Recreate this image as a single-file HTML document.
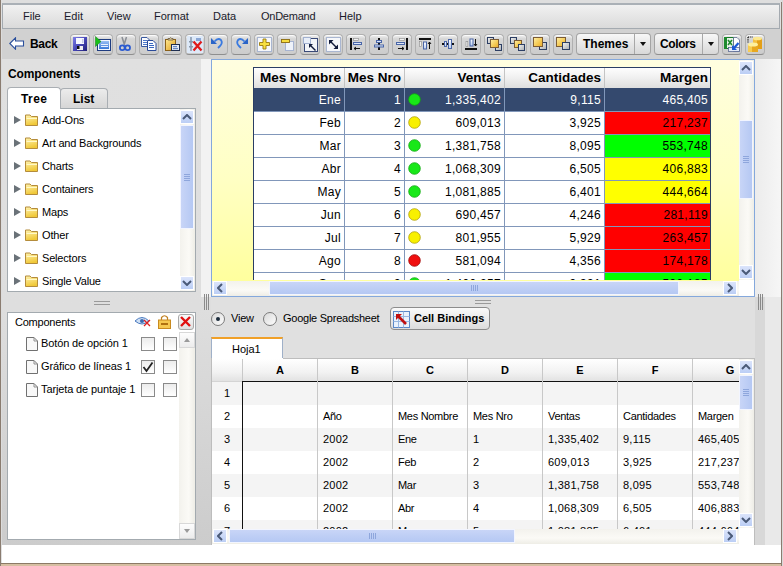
<!DOCTYPE html>
<html><head><meta charset="utf-8">
<style>
*{box-sizing:border-box;margin:0;padding:0}
html,body{width:783px;height:566px;overflow:hidden}
body{position:relative;background:#e0e0e0;font-family:"Liberation Sans",sans-serif;font-size:11px;color:#000}
.a{position:absolute}
.t{position:absolute;white-space:nowrap;line-height:1}
.tb{position:absolute;top:34px;width:20px;height:21px;border:1px solid #b0b0b0;border-bottom-color:#8e8e8e;border-radius:4px;background:linear-gradient(#f2f2f2,#d6d6d6 20%,#cccccc);box-shadow:inset 0 1px 0 #fafafa}
.tb svg{position:absolute;left:0;top:0}
.dd{position:absolute;top:33px;height:22px;border:1px solid #a4a4a4;border-bottom-color:#8e8e8e;border-radius:4px;background:linear-gradient(#f7f7f7,#d8d8d8);font-weight:bold;font-size:12px}
.box{position:absolute;background:#fff;border:1px solid #a3aaaf}
.trk{position:absolute;background:linear-gradient(90deg,#f2f1ec,#fbfaf6 60%,#eeede6)}
.trkh{position:absolute;background:linear-gradient(#f2f1ec,#fbfaf6 60%,#eeede6)}
.sbtn{position:absolute;background:linear-gradient(#dce5fb,#bccff5);border:1px solid #fff}
.thv{position:absolute;background:linear-gradient(90deg,#c9d6f7,#b6c9f3);border:1px solid #f2f5ff}
.thh{position:absolute;background:linear-gradient(#c9d6f7,#b6c9f3);border:1px solid #f2f5ff}
.xbtn{position:absolute;background:linear-gradient(#fafafa,#e4e4e4);border:1px solid #d0d0d0}
.folder{position:absolute;width:13px;height:11px}
.arr{position:absolute;width:0;height:0;border-left:7px solid #58626c;border-top:5px solid transparent;border-bottom:5px solid transparent}
.cb{position:absolute;width:14px;height:14px;border:1px solid #8f8f8f;background:linear-gradient(#f4f4f4,#ffffff)}
.doc{position:absolute}
</style></head><body>
<svg width="0" height="0" style="position:absolute"><defs><linearGradient id="fl" x1="0" y1="0" x2="1" y2="1"><stop offset="0" stop-color="#8080e8"/><stop offset=".5" stop-color="#4848b8"/><stop offset="1" stop-color="#202078"/></linearGradient><linearGradient id="bb" x1="0" y1="0" x2="0" y2="1"><stop offset="0" stop-color="#ffffff"/><stop offset="1" stop-color="#b8cdf0"/></linearGradient><linearGradient id="gg" x1="0" y1="0" x2="1" y2="1"><stop offset="0" stop-color="#f4f4f4"/><stop offset="1" stop-color="#a8acb0"/></linearGradient><linearGradient id="yy" x1="0" y1="0" x2="1" y2="1"><stop offset="0" stop-color="#fff0a8"/><stop offset=".6" stop-color="#f4c850"/><stop offset="1" stop-color="#e8a830"/></linearGradient><linearGradient id="rb" x1="0" y1="0" x2="0" y2="1"><stop offset="0" stop-color="#9cc0f4"/><stop offset="1" stop-color="#3a78d8"/></linearGradient><linearGradient id="cp" x1="0" y1="0" x2="1" y2="1"><stop offset="0" stop-color="#ffe890"/><stop offset="1" stop-color="#e0a020"/></linearGradient></defs></svg>
<div class="a" style="left:0px;top:0px;width:783px;height:3px;background:#dedede"></div>
<div class="a" style="left:2px;top:3px;width:778px;height:26px;border:1px solid #a4aab0;border-top:2px solid #aab0b6;background:linear-gradient(#f1f1f1,#dadada)"></div>
<div class="t" style="left:23px;top:11px;color:#1a1a2a;letter-spacing:0px">File</div>
<div class="t" style="left:64px;top:11px;color:#1a1a2a;letter-spacing:0px">Edit</div>
<div class="t" style="left:107px;top:11px;color:#1a1a2a;letter-spacing:0px">View</div>
<div class="t" style="left:154px;top:11px;color:#1a1a2a;letter-spacing:0px">Format</div>
<div class="t" style="left:213px;top:11px;color:#1a1a2a;letter-spacing:0px">Data</div>
<div class="t" style="left:261px;top:11px;color:#1a1a2a;letter-spacing:-0.25px">OnDemand</div>
<div class="t" style="left:339px;top:11px;color:#1a1a2a;letter-spacing:0px">Help</div>
<div class="a" style="left:2px;top:29px;width:779px;height:30px;background:#d1d1d1"></div>
<div class="a" style="left:1px;top:59px;width:210px;height:486px;background:linear-gradient(#e0e0e0 0px,#dfdfdf 130px,#dedede 250px,#cccccc 486px)"></div>
<svg class="a" style="left:9px;top:37px" width="16" height="13" viewBox="0 0 16 13"><path d="M0.8 6.5 L6.5 0.8 V4 H14.5 V9 H6.5 V12.2 Z" fill="#fff" stroke="#2a4f9c" stroke-width="1.1"/></svg>
<div class="t" style="left:30px;top:38px;font-weight:bold;font-size:12px;letter-spacing:-0.3px">Back</div>
<div class="tb" style="left:70px"><svg width="18" height="19" viewBox="0 0 18 19"><rect x="2" y="2" width="14" height="14" fill="url(#fl)"/><rect x="5" y="3" width="8" height="6" fill="#f6f8ff"/><rect x="11" y="4" width="1.5" height="4" fill="#c8cce8"/><rect x="6" y="11" width="6" height="4" fill="#f0f0f0"/><rect x="6" y="11" width="2.5" height="3" fill="#111"/></svg></div>
<div class="tb" style="left:93px"><svg width="18" height="19" viewBox="0 0 18 19"><rect x="3" y="4" width="14" height="12" fill="#1e3c80"/><rect x="4" y="5" width="12" height="10" fill="#f4f8ff"/><rect x="5" y="6" width="10" height="8" fill="url(#rb)"/><rect x="7" y="9" width="7" height="1" fill="#e8f0ff"/><rect x="7" y="11" width="7" height="1" fill="#e8f0ff"/><path d="M1.5 1.5 L7 6.5 L1.5 11.5 Z" fill="#18c018" stroke="#0e7a0e" stroke-width=".5"/></svg></div>
<div class="tb" style="left:116px"><svg width="18" height="19" viewBox="0 0 18 19"><path d="M5 2 L7.5 10 M9.5 2 L7 10" stroke="#8a8e96" stroke-width="1.5"/><circle cx="5.3" cy="12.8" r="2.4" fill="none" stroke="#2a5ad0" stroke-width="1.8"/><circle cx="10.6" cy="12.8" r="2.4" fill="none" stroke="#2a5ad0" stroke-width="1.8"/></svg></div>
<div class="tb" style="left:139px"><svg width="18" height="19" viewBox="0 0 18 19"><path d="M1.5 2.5 H7 L9.5 5 V11.5 H1.5 Z" fill="#fbfcff" stroke="#3a5aa0"/><rect x="3" y="5" width="4" height="1" fill="#4d78c8"/><rect x="3" y="7" width="5" height="1" fill="#4d78c8"/><rect x="3" y="9" width="5" height="1" fill="#4d78c8"/><path d="M7.5 5.5 H13 L16 8.5 V15.5 H7.5 Z" fill="#fbfcff" stroke="#2a4a98"/><rect x="9" y="8" width="4" height="1" fill="#3a68c0"/><rect x="9" y="10" width="5" height="1" fill="#3a68c0"/><rect x="9" y="12" width="5" height="1" fill="#3a68c0"/></svg></div>
<div class="tb" style="left:162px"><svg width="18" height="19" viewBox="0 0 18 19"><rect x="2.5" y="4.5" width="10" height="11" fill="url(#cp)" stroke="#8a6018"/><path d="M5 5 V3.5 H7 Q7.5 1.5 8.5 3.5 H10 V5 Z" fill="#e8d8a8" stroke="#6a5a40" stroke-width=".8"/><rect x="8.5" y="9.5" width="8" height="6" fill="#e4ebf6" stroke="#1e2e50"/><rect x="10" y="11" width="4" height="1.2" fill="#6a88c0"/><rect x="10" y="13" width="5" height="1.2" fill="#6a88c0"/></svg></div>
<div class="tb" style="left:185px"><svg width="18" height="19" viewBox="0 0 18 19"><rect x="1" y="1" width="16" height="17" fill="#dde9f8"/><rect x="10" y="3" width="5" height="3" fill="#8aa6d4"/><path d="M5 2 V16" stroke="#6e8098" stroke-width="1.2"/><rect x="3" y="6" width="4" height="1.5" fill="#8a98a8"/><rect x="3" y="11" width="4" height="1.5" fill="#8a98a8"/><path d="M7.5 6.5 L15.5 15.5 M15.5 6.5 L7.5 15.5" stroke="#e01a1a" stroke-width="2.3"/></svg></div>
<div class="tb" style="left:208px"><svg width="18" height="19" viewBox="0 0 18 19"><path d="M5.5 6.5 Q9 2.5 12 5 Q14 8 11 11 L9 13" fill="none" stroke="#3a7ae0" stroke-width="1.8"/><path d="M2 3 L2 9 L8 9 Z" fill="#2a64c8"/></svg></div>
<div class="tb" style="left:231px"><svg width="18" height="19" viewBox="0 0 18 19"><path d="M12.5 6.5 Q9 2.5 6 5 Q4 8 7 11 L9 13" fill="none" stroke="#3a7ae0" stroke-width="1.8"/><path d="M16 3 L16 9 L10 9 Z" fill="#2a64c8"/></svg></div>
<div class="tb" style="left:254px"><svg width="18" height="19" viewBox="0 0 18 19"><rect x="2" y="2" width="15" height="15" fill="#f6f7fa"/><rect x="2.5" y="2.5" width="14" height="14" fill="none" stroke="#5c74a8" stroke-width="1" stroke-dasharray="1 1"/><path d="M8 4 H11 V7.5 H14.5 V10.5 H11 V14 H8 V10.5 H4.5 V7.5 H8 Z" fill="#f8e040" stroke="#9a7a10" stroke-width=".9"/></svg></div>
<div class="tb" style="left:277px"><svg width="18" height="19" viewBox="0 0 18 19"><rect x="7" y="6" width="9" height="10" fill="#eef2fa"/><rect x="7.5" y="6.5" width="8" height="9" fill="none" stroke="#5c74a8" stroke-width="1" stroke-dasharray="1 1"/><rect x="3.5" y="4.5" width="8" height="3" fill="#f6dc40" stroke="#8a6a10" stroke-width=".9"/></svg></div>
<div class="tb" style="left:300px"><svg width="18" height="19" viewBox="0 0 18 19"><rect x="3.5" y="3.5" width="13" height="13" fill="#f2f4f8" stroke="#3a4a78"/><rect x="2" y="2" width="8" height="7" fill="#e8eef8"/><rect x="2.5" y="2.5" width="7" height="6" fill="none" stroke="#5c74a8" stroke-width="1" stroke-dasharray="1 1"/><path d="M8.5 9.5 L14.5 15.5" stroke="#101a3a" stroke-width="1.4"/><path d="M8 9 L12 9 L8 13 Z" fill="#101a3a"/></svg></div>
<div class="tb" style="left:323px"><svg width="18" height="19" viewBox="0 0 18 19"><rect x="2" y="2" width="15" height="15" fill="#f6f7fa"/><rect x="2.5" y="2.5" width="14" height="14" fill="none" stroke="#5c74a8" stroke-width="1" stroke-dasharray="1 1"/><path d="M5.5 5.5 L13.5 13.5" stroke="#101a3a" stroke-width="1.4"/><path d="M5 5 L9.5 5 L5 9.5 Z M14 14 L9.5 14 L14 9.5 Z" fill="#101a3a"/></svg></div>
<div class="tb" style="left:346px"><svg width="18" height="19" viewBox="0 0 18 19"><rect x="3" y="3" width="2" height="12" fill="#111"/><rect x="6.5" y="3.5" width="5" height="1.8" fill="#f2f2f2" stroke="#8a8a8a" stroke-width=".6"/><rect x="6.5" y="7.5" width="8" height="2" fill="url(#bb)" stroke="#4a66a8" stroke-width="1"/><path d="M13 13.5 H7 M7 13.5 L9 12 M7 13.5 L9 15" stroke="#111" stroke-width="1"/></svg></div>
<div class="tb" style="left:369px"><svg width="18" height="19" viewBox="0 0 18 19"><rect x="8" y="3" width="2" height="12" fill="#111"/><rect x="6.5" y="5.5" width="5" height="2" fill="url(#bb)" stroke="#4a66a8" stroke-width="1"/><rect x="4.5" y="10.0" width="9" height="2" fill="url(#bb)" stroke="#4a66a8" stroke-width="1"/></svg></div>
<div class="tb" style="left:392px"><svg width="18" height="19" viewBox="0 0 18 19"><rect x="13" y="3" width="2" height="12" fill="#111"/><rect x="6.5" y="3.5" width="5" height="1.8" fill="#f2f2f2" stroke="#8a8a8a" stroke-width=".6"/><rect x="3.5" y="7.5" width="8" height="2" fill="url(#bb)" stroke="#4a66a8" stroke-width="1"/><path d="M5 13.5 H11 M11 13.5 L9 12 M11 13.5 L9 15" stroke="#111" stroke-width="1"/></svg></div>
<div class="tb" style="left:415px"><svg width="18" height="19" viewBox="0 0 18 19"><rect x="3" y="3" width="12" height="2" fill="#111"/><rect x="3.5" y="6.5" width="1.8" height="5" fill="#f2f2f2" stroke="#8a8a8a" stroke-width=".6"/><rect x="7.5" y="7.0" width="3" height="7" fill="url(#bb)" stroke="#4a66a8" stroke-width="1"/><path d="M13.5 14 V7 M13.5 7 L12 9 M13.5 7 L15 9" stroke="#111" stroke-width="1"/></svg></div>
<div class="tb" style="left:438px"><svg width="18" height="19" viewBox="0 0 18 19"><rect x="3" y="8" width="12" height="2" fill="#111"/><rect x="5.5" y="6.5" width="2" height="5" fill="url(#bb)" stroke="#4a66a8" stroke-width="1"/><rect x="9.5" y="4.5" width="3" height="9" fill="url(#bb)" stroke="#4a66a8" stroke-width="1"/></svg></div>
<div class="tb" style="left:461px"><svg width="18" height="19" viewBox="0 0 18 19"><rect x="3" y="13" width="12" height="2" fill="#111"/><rect x="4" y="6.5" width="1.8" height="5" fill="#f2f2f2" stroke="#8a8a8a" stroke-width=".6"/><rect x="8.0" y="4.0" width="3" height="7" fill="url(#bb)" stroke="#4a66a8" stroke-width="1"/><path d="M13.5 4 V11 M13.5 11 L12 9 M13.5 11 L15 9" stroke="#111" stroke-width="1"/></svg></div>
<div class="tb" style="left:484px"><svg width="18" height="19" viewBox="0 0 18 19"><rect x="2.5" y="2.5" width="6" height="6" fill="url(#gg)" stroke="#2c3e64"/><rect x="10.5" y="9.5" width="6" height="6" fill="url(#gg)" stroke="#2c3e64"/><rect x="5.5" y="4.5" width="8" height="8" fill="url(#yy)" stroke="#7c5c34"/></svg></div>
<div class="tb" style="left:507px"><svg width="18" height="19" viewBox="0 0 18 19"><rect x="2.5" y="2.5" width="6" height="6" fill="url(#gg)" stroke="#2c3e64"/><rect x="6.5" y="5.5" width="7" height="7" fill="url(#yy)" stroke="#7c5c34"/><rect x="10.5" y="9.5" width="6" height="6" fill="url(#gg)" stroke="#2c3e64"/></svg></div>
<div class="tb" style="left:530px"><svg width="18" height="19" viewBox="0 0 18 19"><rect x="8.5" y="7.5" width="7" height="7" fill="url(#gg)" stroke="#2c3e64"/><rect x="2.5" y="2.5" width="9" height="9" fill="url(#yy)" stroke="#7c5c34"/></svg></div>
<div class="tb" style="left:553px"><svg width="18" height="19" viewBox="0 0 18 19"><rect x="2.5" y="2.5" width="9" height="9" fill="url(#yy)" stroke="#7c5c34"/><rect x="8.5" y="7.5" width="7" height="7" fill="url(#gg)" stroke="#2c3e64"/></svg></div>
<div class="dd" style="left:576px;width:75px"><span class="t" style="left:6px;top:4px;letter-spacing:0px">Themes</span><span class="a" style="left:57px;top:0;width:1px;height:20px;background:#a8a8a8"></span><span class="a" style="left:63px;top:8px;width:0;height:0;border-left:3.5px solid transparent;border-right:3.5px solid transparent;border-top:4px solid #111"></span></div>
<div class="dd" style="left:654px;width:65px"><span class="t" style="left:5px;top:4px;letter-spacing:-0.4px">Colors</span><span class="a" style="left:47px;top:0;width:1px;height:20px;background:#a8a8a8"></span><span class="a" style="left:53px;top:8px;width:0;height:0;border-left:3.5px solid transparent;border-right:3.5px solid transparent;border-top:4px solid #111"></span></div>
<div class="tb" style="left:722px"><svg width="18" height="19" viewBox="0 0 18 19"><rect x="1.5" y="2.5" width="9" height="11" fill="#e8f4e8" stroke="#1a7a2a"/><rect x="1" y="2" width="3" height="12" fill="#1e8a2e"/><path d="M5 5 L9 10 M9 5 L5 10" stroke="#1e8a2e" stroke-width="1.6"/><path d="M10.5 2.5 H14 L16.5 5 V16.5 H10.5 Z" fill="#fff" stroke="#5a6a90" stroke-width=".8"/><rect x="5.5" y="12.5" width="11" height="4" fill="#e6ecf8" stroke="#4a5a88" stroke-width=".7"/><path d="M15.5 8 L11 13" stroke="#1a5ad8" stroke-width="2.2"/><path d="M9 10 L9 15 L14 15 Z" fill="#1a5ad8"/></svg></div>
<div class="tb" style="left:745px"><svg width="18" height="19" viewBox="0 0 18 19"><path d="M2 2 H7 M2 2 V8" stroke="#111" stroke-width="1.2" stroke-dasharray="1.2 1"/><rect x="7" y="3" width="9" height="11" fill="#e4a018"/><rect x="7" y="3" width="4" height="11" fill="#f4c040"/><ellipse cx="11.5" cy="3.5" rx="4.5" ry="1.8" fill="#fce890"/><rect x="2" y="9" width="10" height="8" fill="#e8a820"/><rect x="2" y="9" width="4" height="8" fill="#f8cc50"/><ellipse cx="7" cy="9.5" rx="5" ry="2" fill="#fdf0a0"/></svg></div>
<div class="t" style="left:8px;top:68px;font-weight:bold;font-size:12px;letter-spacing:-0.1px">Components</div>
<div class="a" style="left:60px;top:88px;width:48px;height:21px;border:1px solid #a9aeb3;border-bottom:none;border-radius:4px 4px 0 0;background:linear-gradient(#ececec,#d5d5d5)"></div>
<div class="t" style="left:73px;top:93px;font-weight:bold;font-size:12px">List</div>
<div class="a" style="left:7px;top:108px;width:189px;height:184px;background:#fff;border:1px solid #a3aaaf"></div>
<div class="a" style="left:7px;top:87px;width:54px;height:22px;border:1px solid #a9aeb3;border-bottom:none;border-radius:4px 4px 0 0;background:#fff"></div>
<div class="t" style="left:21px;top:93px;font-weight:bold;font-size:12px;letter-spacing:0.4px">Tree</div>
<div class="arr" style="left:14px;top:116px;border-left:7px solid #6a7278;border-top-width:4px;border-bottom-width:4px"></div>
<div class="a" style="left:25px;top:114px;line-height:0"><svg width="14" height="12" viewBox="0 0 14 12"><defs><linearGradient id="fg" x1="0" y1="0" x2="0.3" y2="1"><stop offset="0" stop-color="#fff3b0"/><stop offset="1" stop-color="#f0c838"/></linearGradient></defs><path d="M0.5 11.5 V1 H5 L6.5 2.5 H12.5 V11.5 Z" fill="url(#fg)" stroke="#b48c3c"/><path d="M1.5 4.5 H12" stroke="#fff8c8" stroke-width="1"/></svg></div>
<div class="t" style="left:42px;top:115px;letter-spacing:-0.18px">Add-Ons</div>
<div class="arr" style="left:14px;top:139px;border-left:7px solid #6a7278;border-top-width:4px;border-bottom-width:4px"></div>
<div class="a" style="left:25px;top:137px;line-height:0"><svg width="14" height="12" viewBox="0 0 14 12"><defs><linearGradient id="fg" x1="0" y1="0" x2="0.3" y2="1"><stop offset="0" stop-color="#fff3b0"/><stop offset="1" stop-color="#f0c838"/></linearGradient></defs><path d="M0.5 11.5 V1 H5 L6.5 2.5 H12.5 V11.5 Z" fill="url(#fg)" stroke="#b48c3c"/><path d="M1.5 4.5 H12" stroke="#fff8c8" stroke-width="1"/></svg></div>
<div class="t" style="left:42px;top:138px;letter-spacing:-0.18px">Art and Backgrounds</div>
<div class="arr" style="left:14px;top:162px;border-left:7px solid #6a7278;border-top-width:4px;border-bottom-width:4px"></div>
<div class="a" style="left:25px;top:160px;line-height:0"><svg width="14" height="12" viewBox="0 0 14 12"><defs><linearGradient id="fg" x1="0" y1="0" x2="0.3" y2="1"><stop offset="0" stop-color="#fff3b0"/><stop offset="1" stop-color="#f0c838"/></linearGradient></defs><path d="M0.5 11.5 V1 H5 L6.5 2.5 H12.5 V11.5 Z" fill="url(#fg)" stroke="#b48c3c"/><path d="M1.5 4.5 H12" stroke="#fff8c8" stroke-width="1"/></svg></div>
<div class="t" style="left:42px;top:161px;letter-spacing:-0.18px">Charts</div>
<div class="arr" style="left:14px;top:185px;border-left:7px solid #6a7278;border-top-width:4px;border-bottom-width:4px"></div>
<div class="a" style="left:25px;top:183px;line-height:0"><svg width="14" height="12" viewBox="0 0 14 12"><defs><linearGradient id="fg" x1="0" y1="0" x2="0.3" y2="1"><stop offset="0" stop-color="#fff3b0"/><stop offset="1" stop-color="#f0c838"/></linearGradient></defs><path d="M0.5 11.5 V1 H5 L6.5 2.5 H12.5 V11.5 Z" fill="url(#fg)" stroke="#b48c3c"/><path d="M1.5 4.5 H12" stroke="#fff8c8" stroke-width="1"/></svg></div>
<div class="t" style="left:42px;top:184px;letter-spacing:-0.18px">Containers</div>
<div class="arr" style="left:14px;top:208px;border-left:7px solid #6a7278;border-top-width:4px;border-bottom-width:4px"></div>
<div class="a" style="left:25px;top:206px;line-height:0"><svg width="14" height="12" viewBox="0 0 14 12"><defs><linearGradient id="fg" x1="0" y1="0" x2="0.3" y2="1"><stop offset="0" stop-color="#fff3b0"/><stop offset="1" stop-color="#f0c838"/></linearGradient></defs><path d="M0.5 11.5 V1 H5 L6.5 2.5 H12.5 V11.5 Z" fill="url(#fg)" stroke="#b48c3c"/><path d="M1.5 4.5 H12" stroke="#fff8c8" stroke-width="1"/></svg></div>
<div class="t" style="left:42px;top:207px;letter-spacing:-0.18px">Maps</div>
<div class="arr" style="left:14px;top:231px;border-left:7px solid #6a7278;border-top-width:4px;border-bottom-width:4px"></div>
<div class="a" style="left:25px;top:229px;line-height:0"><svg width="14" height="12" viewBox="0 0 14 12"><defs><linearGradient id="fg" x1="0" y1="0" x2="0.3" y2="1"><stop offset="0" stop-color="#fff3b0"/><stop offset="1" stop-color="#f0c838"/></linearGradient></defs><path d="M0.5 11.5 V1 H5 L6.5 2.5 H12.5 V11.5 Z" fill="url(#fg)" stroke="#b48c3c"/><path d="M1.5 4.5 H12" stroke="#fff8c8" stroke-width="1"/></svg></div>
<div class="t" style="left:42px;top:230px;letter-spacing:-0.18px">Other</div>
<div class="arr" style="left:14px;top:254px;border-left:7px solid #6a7278;border-top-width:4px;border-bottom-width:4px"></div>
<div class="a" style="left:25px;top:252px;line-height:0"><svg width="14" height="12" viewBox="0 0 14 12"><defs><linearGradient id="fg" x1="0" y1="0" x2="0.3" y2="1"><stop offset="0" stop-color="#fff3b0"/><stop offset="1" stop-color="#f0c838"/></linearGradient></defs><path d="M0.5 11.5 V1 H5 L6.5 2.5 H12.5 V11.5 Z" fill="url(#fg)" stroke="#b48c3c"/><path d="M1.5 4.5 H12" stroke="#fff8c8" stroke-width="1"/></svg></div>
<div class="t" style="left:42px;top:253px;letter-spacing:-0.18px">Selectors</div>
<div class="arr" style="left:14px;top:277px;border-left:7px solid #6a7278;border-top-width:4px;border-bottom-width:4px"></div>
<div class="a" style="left:25px;top:275px;line-height:0"><svg width="14" height="12" viewBox="0 0 14 12"><defs><linearGradient id="fg" x1="0" y1="0" x2="0.3" y2="1"><stop offset="0" stop-color="#fff3b0"/><stop offset="1" stop-color="#f0c838"/></linearGradient></defs><path d="M0.5 11.5 V1 H5 L6.5 2.5 H12.5 V11.5 Z" fill="url(#fg)" stroke="#b48c3c"/><path d="M1.5 4.5 H12" stroke="#fff8c8" stroke-width="1"/></svg></div>
<div class="t" style="left:42px;top:276px;letter-spacing:-0.18px">Single Value</div>
<div class="a" style="left:180px;top:109px;width:15px;height:182px;background:linear-gradient(90deg,#f3f2ed,#fbfaf6 60%,#eeede6)"></div>
<div class="a" style="left:180px;top:110px;width:14px;height:14px;background:linear-gradient(#dbe4fb,#bbcef5);border:1px solid #fff"></div>
<div class="a" style="left:180px;top:125px;width:14px;height:104px;background:linear-gradient(90deg,#c8d5f7,#b5c8f3);border:1px solid #f2f5ff"></div>
<div class="a" style="left:180px;top:276px;width:14px;height:14px;background:linear-gradient(#dbe4fb,#bbcef5);border:1px solid #fff"></div>
<svg class="a" style="left:182px;top:114px" width="10" height="6" viewBox="0 0 10 6"><path d="M1 5 L5 1 L9 5" fill="none" stroke="#4a5a78" stroke-width="2"/></svg>
<svg class="a" style="left:182px;top:280px" width="10" height="6" viewBox="0 0 10 6"><path d="M1 1 L5 5 L9 1" fill="none" stroke="#4a5a78" stroke-width="2"/></svg>
<div class="a" style="left:184px;top:174px;width:6px;height:1px;background:#8ea6dc"></div>
<div class="a" style="left:184px;top:176px;width:6px;height:1px;background:#8ea6dc"></div>
<div class="a" style="left:184px;top:178px;width:6px;height:1px;background:#8ea6dc"></div>
<div class="a" style="left:184px;top:180px;width:6px;height:1px;background:#8ea6dc"></div>
<div class="a" style="left:94px;top:301px;width:16px;height:1px;background:#9a9a9a"></div>
<div class="a" style="left:94px;top:304px;width:16px;height:1px;background:#9a9a9a"></div>
<div class="a" style="left:7px;top:312px;width:189px;height:228px;background:#fff;border:1px solid #a3aaaf"></div>
<div class="t" style="left:15px;top:317px;letter-spacing:-0.22px">Components</div>
<div class="a" style="left:26px;top:337px"><svg width="12" height="14" viewBox="0 0 12 14"><path d="M0.5 0.5 H8 L11.5 4 V13.5 H0.5 Z" fill="#f8f8f8" stroke="#707070"/><path d="M8 0.5 V4 H11.5" fill="none" stroke="#909090"/></svg></div>
<div class="t" style="left:41px;top:338px;letter-spacing:-0.12px">Botón de opción 1</div>
<div class="a" style="left:141px;top:337px;width:14px;height:14px;border:1px solid #8a8a8a;background:linear-gradient(#ececec,#fff)"></div>
<div class="a" style="left:163px;top:337px;width:14px;height:14px;border:1px solid #8a8a8a;background:linear-gradient(#ececec,#fff)"></div>
<div class="a" style="left:26px;top:360px"><svg width="12" height="14" viewBox="0 0 12 14"><path d="M0.5 0.5 H8 L11.5 4 V13.5 H0.5 Z" fill="#f8f8f8" stroke="#707070"/><path d="M8 0.5 V4 H11.5" fill="none" stroke="#909090"/></svg></div>
<div class="t" style="left:41px;top:361px;letter-spacing:-0.12px">Gráfico de líneas 1</div>
<div class="a" style="left:141px;top:360px;width:14px;height:14px;border:1px solid #8a8a8a;background:linear-gradient(#ececec,#fff)"></div>
<div class="a" style="left:163px;top:360px;width:14px;height:14px;border:1px solid #8a8a8a;background:linear-gradient(#ececec,#fff)"></div>
<div class="a" style="left:26px;top:383px"><svg width="12" height="14" viewBox="0 0 12 14"><path d="M0.5 0.5 H8 L11.5 4 V13.5 H0.5 Z" fill="#f8f8f8" stroke="#707070"/><path d="M8 0.5 V4 H11.5" fill="none" stroke="#909090"/></svg></div>
<div class="t" style="left:41px;top:384px;letter-spacing:-0.12px">Tarjeta de puntaje 1</div>
<div class="a" style="left:141px;top:383px;width:14px;height:14px;border:1px solid #8a8a8a;background:linear-gradient(#ececec,#fff)"></div>
<div class="a" style="left:163px;top:383px;width:14px;height:14px;border:1px solid #8a8a8a;background:linear-gradient(#ececec,#fff)"></div>
<svg class="a" style="left:142px;top:361px" width="12" height="12" viewBox="0 0 12 12"><path d="M1.5 6 L4.5 10 L10.5 1.5" fill="none" stroke="#222" stroke-width="1.8"/></svg>
<svg class="a" style="left:134px;top:316px" width="17" height="11" viewBox="0 0 17 11"><path d="M1 5 Q8 -2 15 5 Q8 11 1 5 Z" fill="#cfe0f4" stroke="#4a7ac0"/><circle cx="8" cy="5" r="2" fill="#3a6ab0"/><path d="M10 4 L16 10 M16 4 L10 10" stroke="#e02020" stroke-width="1.3"/></svg>
<svg class="a" style="left:158px;top:314px" width="13" height="15" viewBox="0 0 13 15"><path d="M3.5 6 V3.5 Q6.5 0 9.5 3.5 V6" fill="none" stroke="#c08020" stroke-width="1.2"/><rect x="0.5" y="6" width="12" height="8.5" fill="#f6c850" stroke="#c88a20"/><rect x="3" y="9" width="7" height="2" fill="#b07010"/></svg>
<div class="a" style="left:178px;top:314px;width:16px;height:16px;border:1px solid #a8a8a8;border-radius:3px;background:linear-gradient(#fafafa,#e0e0e0)"></div>
<svg class="a" style="left:179px;top:315px" width="13" height="13" viewBox="0 0 13 13"><path d="M2 2 L11 11 M11 2 L2 11" stroke="#e01010" stroke-width="2.4"/></svg>
<div class="a" style="left:179px;top:332px;width:16px;height:207px;background:linear-gradient(90deg,#f3f2ed,#fbfaf6 60%,#eeede6)"></div>
<div class="a" style="left:179px;top:332px;width:16px;height:16px;background:linear-gradient(#fdfdfd,#ececec);border:1px solid #d8d8d8"></div>
<div class="a" style="left:179px;top:523px;width:16px;height:16px;background:linear-gradient(#fdfdfd,#ececec);border:1px solid #d8d8d8"></div>
<div class="a" style="left:183.5px;top:338px;border-left:3.5px solid transparent;border-right:3.5px solid transparent;border-bottom:4px solid #9a9a9a"></div>
<div class="a" style="left:183.5px;top:529px;border-left:3.5px solid transparent;border-right:3.5px solid transparent;border-top:4px solid #9a9a9a"></div>
<div class="a" style="left:201px;top:59px;width:10px;height:238px;background:#f2f2f2"></div>
<div class="a" style="left:755px;top:59px;width:26px;height:238px;background:linear-gradient(90deg,#ececec,#f6f6f6)"></div>
<div class="a" style="left:755px;top:297px;width:10px;height:248px;background:#d8d8d8"></div>
<div class="a" style="left:765px;top:297px;width:16px;height:248px;background:#e9e9e9"></div>
<div class="a" style="left:204px;top:294px;width:1px;height:16px;background:#8a8a8a"></div>
<div class="a" style="left:206px;top:294px;width:1px;height:16px;background:#8a8a8a"></div>
<div class="a" style="left:208px;top:294px;width:1px;height:16px;background:#8a8a8a"></div>
<div class="a" style="left:758px;top:294px;width:1px;height:16px;background:#8a8a8a"></div>
<div class="a" style="left:760px;top:294px;width:1px;height:16px;background:#8a8a8a"></div>
<div class="a" style="left:762px;top:294px;width:1px;height:16px;background:#8a8a8a"></div>
<div class="a" style="left:211px;top:59px;width:544px;height:238px;border:1px solid #84a8dc;background:linear-gradient(#fffee0,#ffffc4 50%,#ffff98)"></div>
<div class="a" style="left:253px;top:67px;width:458px;height:213px;background:#fff"></div>
<div class="a" style="left:253px;top:67px;width:458px;height:21px;background:linear-gradient(#ffffff,#f0f0f0 50%,#dedede)"></div>
<div class="a" style="left:253px;top:67px;width:458px;height:1px;background:#2a3d64"></div>
<div class="a" style="left:253px;top:67px;width:1px;height:213px;background:#2a3d64"></div>
<div class="a" style="left:710px;top:67px;width:1px;height:213px;background:#2a3d64"></div>
<div class="a" style="left:344px;top:68px;width:1px;height:20px;background:#c4c4c4"></div>
<div class="a" style="left:404px;top:68px;width:1px;height:20px;background:#c4c4c4"></div>
<div class="a" style="left:504px;top:68px;width:1px;height:20px;background:#c4c4c4"></div>
<div class="a" style="left:604px;top:68px;width:1px;height:20px;background:#c4c4c4"></div>
<div class="t" style="left:253px;width:88px;text-align:right;top:71px;font-weight:bold;font-size:13.5px">Mes Nombre</div>
<div class="t" style="left:344px;width:57px;text-align:right;top:71px;font-weight:bold;font-size:13.5px">Mes Nro</div>
<div class="t" style="left:404px;width:97px;text-align:right;top:71px;font-weight:bold;font-size:13.5px">Ventas</div>
<div class="t" style="left:504px;width:97px;text-align:right;top:71px;font-weight:bold;font-size:13.5px">Cantidades</div>
<div class="t" style="left:604px;width:104px;text-align:right;top:71px;font-weight:bold;font-size:13.5px">Margen</div>
<div class="a" style="left:0;top:0;width:783px;height:280px;overflow:hidden">
<div class="a" style="left:254px;top:88px;width:456px;height:23px;background:#34496e"></div>
<div class="a" style="left:344px;top:88px;width:1px;height:23px;background:#8197ba"></div>
<div class="a" style="left:404px;top:88px;width:1px;height:23px;background:#8197ba"></div>
<div class="a" style="left:504px;top:88px;width:1px;height:23px;background:#8197ba"></div>
<div class="a" style="left:604px;top:88px;width:1px;height:23px;background:#8197ba"></div>
<div class="t" style="left:253px;width:88px;text-align:right;top:94px;font-size:12px;letter-spacing:0.3px;color:#fff">Ene</div>
<div class="t" style="left:344px;width:57px;text-align:right;top:94px;font-size:12px;letter-spacing:0.3px;color:#fff">1</div>
<div class="t" style="left:404px;width:97px;text-align:right;top:94px;font-size:12px;letter-spacing:0.3px;color:#fff">1,335,402</div>
<div class="t" style="left:504px;width:97px;text-align:right;top:94px;font-size:12px;letter-spacing:0.3px;color:#fff">9,115</div>
<div class="t" style="left:604px;width:104px;text-align:right;top:94px;font-size:12px;letter-spacing:0.3px;color:#fff">465,405</div>
<svg class="a" style="left:408px;top:93px" width="13" height="13" viewBox="0 0 13 13"><circle cx="6.5" cy="6.5" r="5.8" fill="#18e818" stroke="#10a810" stroke-width=".8"/></svg>
<div class="a" style="left:254px;top:111px;width:456px;height:23px;background:#fff"></div>
<div class="a" style="left:605px;top:111px;width:105px;height:23px;background:#ff0000"></div>
<div class="a" style="left:254px;top:111px;width:456px;height:1px;background:#8197ba"></div>
<div class="a" style="left:344px;top:111px;width:1px;height:23px;background:#8197ba"></div>
<div class="a" style="left:404px;top:111px;width:1px;height:23px;background:#8197ba"></div>
<div class="a" style="left:504px;top:111px;width:1px;height:23px;background:#8197ba"></div>
<div class="a" style="left:604px;top:111px;width:1px;height:23px;background:#8197ba"></div>
<div class="t" style="left:253px;width:88px;text-align:right;top:117px;font-size:12px;letter-spacing:0.3px;color:#000">Feb</div>
<div class="t" style="left:344px;width:57px;text-align:right;top:117px;font-size:12px;letter-spacing:0.3px;color:#000">2</div>
<div class="t" style="left:404px;width:97px;text-align:right;top:117px;font-size:12px;letter-spacing:0.3px;color:#000">609,013</div>
<div class="t" style="left:504px;width:97px;text-align:right;top:117px;font-size:12px;letter-spacing:0.3px;color:#000">3,925</div>
<div class="t" style="left:604px;width:104px;text-align:right;top:117px;font-size:12px;letter-spacing:0.3px;color:#000">217,237</div>
<svg class="a" style="left:408px;top:116px" width="13" height="13" viewBox="0 0 13 13"><circle cx="6.5" cy="6.5" r="5.8" fill="#f8f000" stroke="#b0a000" stroke-width=".8"/></svg>
<div class="a" style="left:254px;top:134px;width:456px;height:23px;background:#fff"></div>
<div class="a" style="left:605px;top:134px;width:105px;height:23px;background:#00ff00"></div>
<div class="a" style="left:254px;top:134px;width:456px;height:1px;background:#8197ba"></div>
<div class="a" style="left:344px;top:134px;width:1px;height:23px;background:#8197ba"></div>
<div class="a" style="left:404px;top:134px;width:1px;height:23px;background:#8197ba"></div>
<div class="a" style="left:504px;top:134px;width:1px;height:23px;background:#8197ba"></div>
<div class="a" style="left:604px;top:134px;width:1px;height:23px;background:#8197ba"></div>
<div class="t" style="left:253px;width:88px;text-align:right;top:140px;font-size:12px;letter-spacing:0.3px;color:#000">Mar</div>
<div class="t" style="left:344px;width:57px;text-align:right;top:140px;font-size:12px;letter-spacing:0.3px;color:#000">3</div>
<div class="t" style="left:404px;width:97px;text-align:right;top:140px;font-size:12px;letter-spacing:0.3px;color:#000">1,381,758</div>
<div class="t" style="left:504px;width:97px;text-align:right;top:140px;font-size:12px;letter-spacing:0.3px;color:#000">8,095</div>
<div class="t" style="left:604px;width:104px;text-align:right;top:140px;font-size:12px;letter-spacing:0.3px;color:#000">553,748</div>
<svg class="a" style="left:408px;top:139px" width="13" height="13" viewBox="0 0 13 13"><circle cx="6.5" cy="6.5" r="5.8" fill="#18e818" stroke="#10a810" stroke-width=".8"/></svg>
<div class="a" style="left:254px;top:157px;width:456px;height:23px;background:#fff"></div>
<div class="a" style="left:605px;top:157px;width:105px;height:23px;background:#ffff00"></div>
<div class="a" style="left:254px;top:157px;width:456px;height:1px;background:#8197ba"></div>
<div class="a" style="left:344px;top:157px;width:1px;height:23px;background:#8197ba"></div>
<div class="a" style="left:404px;top:157px;width:1px;height:23px;background:#8197ba"></div>
<div class="a" style="left:504px;top:157px;width:1px;height:23px;background:#8197ba"></div>
<div class="a" style="left:604px;top:157px;width:1px;height:23px;background:#8197ba"></div>
<div class="t" style="left:253px;width:88px;text-align:right;top:163px;font-size:12px;letter-spacing:0.3px;color:#000">Abr</div>
<div class="t" style="left:344px;width:57px;text-align:right;top:163px;font-size:12px;letter-spacing:0.3px;color:#000">4</div>
<div class="t" style="left:404px;width:97px;text-align:right;top:163px;font-size:12px;letter-spacing:0.3px;color:#000">1,068,309</div>
<div class="t" style="left:504px;width:97px;text-align:right;top:163px;font-size:12px;letter-spacing:0.3px;color:#000">6,505</div>
<div class="t" style="left:604px;width:104px;text-align:right;top:163px;font-size:12px;letter-spacing:0.3px;color:#000">406,883</div>
<svg class="a" style="left:408px;top:162px" width="13" height="13" viewBox="0 0 13 13"><circle cx="6.5" cy="6.5" r="5.8" fill="#18e818" stroke="#10a810" stroke-width=".8"/></svg>
<div class="a" style="left:254px;top:180px;width:456px;height:23px;background:#fff"></div>
<div class="a" style="left:605px;top:180px;width:105px;height:23px;background:#ffff00"></div>
<div class="a" style="left:254px;top:180px;width:456px;height:1px;background:#8197ba"></div>
<div class="a" style="left:344px;top:180px;width:1px;height:23px;background:#8197ba"></div>
<div class="a" style="left:404px;top:180px;width:1px;height:23px;background:#8197ba"></div>
<div class="a" style="left:504px;top:180px;width:1px;height:23px;background:#8197ba"></div>
<div class="a" style="left:604px;top:180px;width:1px;height:23px;background:#8197ba"></div>
<div class="t" style="left:253px;width:88px;text-align:right;top:186px;font-size:12px;letter-spacing:0.3px;color:#000">May</div>
<div class="t" style="left:344px;width:57px;text-align:right;top:186px;font-size:12px;letter-spacing:0.3px;color:#000">5</div>
<div class="t" style="left:404px;width:97px;text-align:right;top:186px;font-size:12px;letter-spacing:0.3px;color:#000">1,081,885</div>
<div class="t" style="left:504px;width:97px;text-align:right;top:186px;font-size:12px;letter-spacing:0.3px;color:#000">6,401</div>
<div class="t" style="left:604px;width:104px;text-align:right;top:186px;font-size:12px;letter-spacing:0.3px;color:#000">444,664</div>
<svg class="a" style="left:408px;top:185px" width="13" height="13" viewBox="0 0 13 13"><circle cx="6.5" cy="6.5" r="5.8" fill="#18e818" stroke="#10a810" stroke-width=".8"/></svg>
<div class="a" style="left:254px;top:203px;width:456px;height:23px;background:#fff"></div>
<div class="a" style="left:605px;top:203px;width:105px;height:23px;background:#ff0000"></div>
<div class="a" style="left:254px;top:203px;width:456px;height:1px;background:#8197ba"></div>
<div class="a" style="left:344px;top:203px;width:1px;height:23px;background:#8197ba"></div>
<div class="a" style="left:404px;top:203px;width:1px;height:23px;background:#8197ba"></div>
<div class="a" style="left:504px;top:203px;width:1px;height:23px;background:#8197ba"></div>
<div class="a" style="left:604px;top:203px;width:1px;height:23px;background:#8197ba"></div>
<div class="t" style="left:253px;width:88px;text-align:right;top:209px;font-size:12px;letter-spacing:0.3px;color:#000">Jun</div>
<div class="t" style="left:344px;width:57px;text-align:right;top:209px;font-size:12px;letter-spacing:0.3px;color:#000">6</div>
<div class="t" style="left:404px;width:97px;text-align:right;top:209px;font-size:12px;letter-spacing:0.3px;color:#000">690,457</div>
<div class="t" style="left:504px;width:97px;text-align:right;top:209px;font-size:12px;letter-spacing:0.3px;color:#000">4,246</div>
<div class="t" style="left:604px;width:104px;text-align:right;top:209px;font-size:12px;letter-spacing:0.3px;color:#000">281,119</div>
<svg class="a" style="left:408px;top:208px" width="13" height="13" viewBox="0 0 13 13"><circle cx="6.5" cy="6.5" r="5.8" fill="#f8f000" stroke="#b0a000" stroke-width=".8"/></svg>
<div class="a" style="left:254px;top:226px;width:456px;height:23px;background:#fff"></div>
<div class="a" style="left:605px;top:226px;width:105px;height:23px;background:#ff0000"></div>
<div class="a" style="left:254px;top:226px;width:456px;height:1px;background:#8197ba"></div>
<div class="a" style="left:344px;top:226px;width:1px;height:23px;background:#8197ba"></div>
<div class="a" style="left:404px;top:226px;width:1px;height:23px;background:#8197ba"></div>
<div class="a" style="left:504px;top:226px;width:1px;height:23px;background:#8197ba"></div>
<div class="a" style="left:604px;top:226px;width:1px;height:23px;background:#8197ba"></div>
<div class="t" style="left:253px;width:88px;text-align:right;top:232px;font-size:12px;letter-spacing:0.3px;color:#000">Jul</div>
<div class="t" style="left:344px;width:57px;text-align:right;top:232px;font-size:12px;letter-spacing:0.3px;color:#000">7</div>
<div class="t" style="left:404px;width:97px;text-align:right;top:232px;font-size:12px;letter-spacing:0.3px;color:#000">801,955</div>
<div class="t" style="left:504px;width:97px;text-align:right;top:232px;font-size:12px;letter-spacing:0.3px;color:#000">5,929</div>
<div class="t" style="left:604px;width:104px;text-align:right;top:232px;font-size:12px;letter-spacing:0.3px;color:#000">263,457</div>
<svg class="a" style="left:408px;top:231px" width="13" height="13" viewBox="0 0 13 13"><circle cx="6.5" cy="6.5" r="5.8" fill="#f8f000" stroke="#b0a000" stroke-width=".8"/></svg>
<div class="a" style="left:254px;top:249px;width:456px;height:23px;background:#fff"></div>
<div class="a" style="left:605px;top:249px;width:105px;height:23px;background:#ff0000"></div>
<div class="a" style="left:254px;top:249px;width:456px;height:1px;background:#8197ba"></div>
<div class="a" style="left:344px;top:249px;width:1px;height:23px;background:#8197ba"></div>
<div class="a" style="left:404px;top:249px;width:1px;height:23px;background:#8197ba"></div>
<div class="a" style="left:504px;top:249px;width:1px;height:23px;background:#8197ba"></div>
<div class="a" style="left:604px;top:249px;width:1px;height:23px;background:#8197ba"></div>
<div class="t" style="left:253px;width:88px;text-align:right;top:255px;font-size:12px;letter-spacing:0.3px;color:#000">Ago</div>
<div class="t" style="left:344px;width:57px;text-align:right;top:255px;font-size:12px;letter-spacing:0.3px;color:#000">8</div>
<div class="t" style="left:404px;width:97px;text-align:right;top:255px;font-size:12px;letter-spacing:0.3px;color:#000">581,094</div>
<div class="t" style="left:504px;width:97px;text-align:right;top:255px;font-size:12px;letter-spacing:0.3px;color:#000">4,356</div>
<div class="t" style="left:604px;width:104px;text-align:right;top:255px;font-size:12px;letter-spacing:0.3px;color:#000">174,178</div>
<svg class="a" style="left:408px;top:254px" width="13" height="13" viewBox="0 0 13 13"><circle cx="6.5" cy="6.5" r="5.8" fill="#f01010" stroke="#a00808" stroke-width=".8"/></svg>
<div class="a" style="left:254px;top:272px;width:456px;height:23px;background:#fff"></div>
<div class="a" style="left:605px;top:272px;width:105px;height:23px;background:#00ff00"></div>
<div class="a" style="left:254px;top:272px;width:456px;height:1px;background:#8197ba"></div>
<div class="a" style="left:344px;top:272px;width:1px;height:23px;background:#8197ba"></div>
<div class="a" style="left:404px;top:272px;width:1px;height:23px;background:#8197ba"></div>
<div class="a" style="left:504px;top:272px;width:1px;height:23px;background:#8197ba"></div>
<div class="a" style="left:604px;top:272px;width:1px;height:23px;background:#8197ba"></div>
<div class="t" style="left:253px;width:88px;text-align:right;top:278px;font-size:12px;letter-spacing:0.3px;color:#000">Sep</div>
<div class="t" style="left:344px;width:57px;text-align:right;top:278px;font-size:12px;letter-spacing:0.3px;color:#000">9</div>
<div class="t" style="left:404px;width:97px;text-align:right;top:278px;font-size:12px;letter-spacing:0.3px;color:#000">1,400,257</div>
<div class="t" style="left:504px;width:97px;text-align:right;top:278px;font-size:12px;letter-spacing:0.3px;color:#000">9,391</div>
<div class="t" style="left:604px;width:104px;text-align:right;top:278px;font-size:12px;letter-spacing:0.3px;color:#000">590,185</div>
<svg class="a" style="left:408px;top:277px" width="13" height="13" viewBox="0 0 13 13"><circle cx="6.5" cy="6.5" r="5.8" fill="#18e818" stroke="#10a810" stroke-width=".8"/></svg>
</div>
<div class="a" style="left:739px;top:60px;width:15px;height:220px;background:linear-gradient(90deg,#f3f2ed,#fbfaf6 60%,#eeede6)"></div>
<div class="a" style="left:739px;top:61px;width:14px;height:14px;background:linear-gradient(#dbe4fb,#bbcef5);border:1px solid #fff"><div class="a" style="left:1px;top:3px;line-height:0"><svg width="10" height="6" viewBox="0 0 10 6"><path d="M1 5 L5 1 L9 5" fill="none" stroke="#4a5a78" stroke-width="2"/></svg></div></div>
<div class="a" style="left:739px;top:120px;width:14px;height:79px;background:linear-gradient(90deg,#c8d5f7,#b5c8f3);border:1px solid #f2f5ff"></div>
<div class="a" style="left:743px;top:156px;width:6px;height:1px;background:#8ea6dc"></div>
<div class="a" style="left:743px;top:158px;width:6px;height:1px;background:#8ea6dc"></div>
<div class="a" style="left:743px;top:160px;width:6px;height:1px;background:#8ea6dc"></div>
<div class="a" style="left:743px;top:162px;width:6px;height:1px;background:#8ea6dc"></div>
<div class="a" style="left:739px;top:265px;width:14px;height:14px;background:linear-gradient(#dbe4fb,#bbcef5);border:1px solid #fff"><div class="a" style="left:1px;top:3px;line-height:0"><svg width="10" height="6" viewBox="0 0 10 6"><path d="M1 1 L5 5 L9 1" fill="none" stroke="#4a5a78" stroke-width="2"/></svg></div></div>
<div class="a" style="left:212px;top:281px;width:527px;height:15px;background:linear-gradient(#f3f2ed,#fbfaf6 60%,#eeede6)"></div>
<div class="a" style="left:213px;top:281px;width:14px;height:14px;background:linear-gradient(#dbe4fb,#bbcef5);border:1px solid #fff"><div class="a" style="left:3px;top:1px;line-height:0"><svg width="6" height="10" viewBox="0 0 6 10"><path d="M5 1 L1 5 L5 9" fill="none" stroke="#4a5a78" stroke-width="2"/></svg></div></div>
<div class="a" style="left:269px;top:281px;width:410px;height:14px;background:linear-gradient(#c8d5f7,#b5c8f3);border:1px solid #f2f5ff"></div>
<div class="a" style="left:471px;top:285px;width:1px;height:6px;background:#8ea6dc"></div>
<div class="a" style="left:473px;top:285px;width:1px;height:6px;background:#8ea6dc"></div>
<div class="a" style="left:475px;top:285px;width:1px;height:6px;background:#8ea6dc"></div>
<div class="a" style="left:477px;top:285px;width:1px;height:6px;background:#8ea6dc"></div>
<div class="a" style="left:723px;top:281px;width:14px;height:14px;background:linear-gradient(#dbe4fb,#bbcef5);border:1px solid #fff"><div class="a" style="left:3px;top:1px;line-height:0"><svg width="6" height="10" viewBox="0 0 6 10"><path d="M1 1 L5 5 L1 9" fill="none" stroke="#4a5a78" stroke-width="2"/></svg></div></div>
<div class="a" style="left:739px;top:280px;width:15px;height:16px;background:#fff"></div>
<div class="a" style="left:475px;top:300px;width:16px;height:1px;background:#9a9a9a"></div>
<div class="a" style="left:475px;top:303px;width:16px;height:1px;background:#9a9a9a"></div>
<svg width="0" height="0" style="position:absolute"><defs><linearGradient id="rg" x1="0" y1="0" x2="1" y2="1"><stop offset="0" stop-color="#d8d8d8"/><stop offset="1" stop-color="#ffffff"/></linearGradient></defs></svg>
<svg class="a" style="left:211px;top:312px" width="15" height="15" viewBox="0 0 15 15"><circle cx="7" cy="7" r="6.5" fill="url(#rg)" stroke="#7a7a7a"/><circle cx="7" cy="7" r="2" fill="#1a2a3a"/></svg>
<div class="t" style="left:231px;top:313px;font-size:11px;letter-spacing:-0.2px">View</div>
<svg class="a" style="left:263px;top:312px" width="15" height="15" viewBox="0 0 15 15"><circle cx="7" cy="7" r="6.5" fill="url(#rg)" stroke="#7a7a7a"/></svg>
<div class="t" style="left:283px;top:313px;font-size:11px;letter-spacing:-0.25px">Google Spreadsheet</div>
<div class="a" style="left:390px;top:307px;width:100px;height:23px;border:1px solid #8c8c8c;border-radius:4px;background:linear-gradient(#fafafa,#dcdcdc)"></div>
<svg class="a" style="left:393px;top:311px" width="17" height="17" viewBox="0 0 17 17"><rect x="0.5" y="0.5" width="16" height="16" fill="#eaf2fc" stroke="#5a88c8"/><path d="M0.5 5.5 H16.5 M0.5 10.5 H16.5 M5.5 0.5 V16.5 M10.5 0.5 V16.5" stroke="#9ab8e0"/><path d="M4 4 L13 13" stroke="#c01010" stroke-width="2.6"/><path d="M3 3 L9 3 L3 9 Z" fill="#c01010"/></svg>
<div class="t" style="left:414px;top:313px;font-weight:bold;font-size:11px">Cell Bindings</div>
<div class="a" style="left:211px;top:337px;width:72px;height:22px;border:1px solid #9fb0c8;border-top:2px solid #f0a028;border-bottom:none;background:#fff"></div>
<div class="t" style="left:232px;top:344px;font-size:11px">Hoja1</div>
<div class="a" style="left:211px;top:358px;width:544px;height:187px;background:#fff;border:1px solid #bdbdbd;border-bottom:none"></div>
<div class="a" style="left:212px;top:359px;width:527px;height:22px;background:linear-gradient(#ffffff,#f2f2f2 60%,#e2e2e2)"></div>
<div class="a" style="left:242px;top:381px;width:497px;height:1px;background:#111"></div>
<div class="a" style="left:242px;top:381px;width:1px;height:148px;background:#111"></div>
<div class="a" style="left:242px;top:359px;width:1px;height:22px;background:#c8c8c8"></div>
<div class="a" style="left:212px;top:381px;width:30px;height:1px;background:#d4d4d4"></div>
<div class="a" style="left:317px;top:359px;width:1px;height:170px;background:#c8c8c8"></div>
<div class="a" style="left:392px;top:359px;width:1px;height:170px;background:#c8c8c8"></div>
<div class="a" style="left:467px;top:359px;width:1px;height:170px;background:#c8c8c8"></div>
<div class="a" style="left:542px;top:359px;width:1px;height:170px;background:#c8c8c8"></div>
<div class="a" style="left:617px;top:359px;width:1px;height:170px;background:#c8c8c8"></div>
<div class="a" style="left:692px;top:359px;width:1px;height:170px;background:#c8c8c8"></div>
<div class="a" style="left:212px;top:358px;width:71px;height:1px;background:#fff"></div>
<div class="t" style="left:243px;width:74px;text-align:center;top:365px;font-weight:bold;font-size:11px">A</div>
<div class="t" style="left:318px;width:74px;text-align:center;top:365px;font-weight:bold;font-size:11px">B</div>
<div class="t" style="left:393px;width:74px;text-align:center;top:365px;font-weight:bold;font-size:11px">C</div>
<div class="t" style="left:468px;width:74px;text-align:center;top:365px;font-weight:bold;font-size:11px">D</div>
<div class="t" style="left:543px;width:74px;text-align:center;top:365px;font-weight:bold;font-size:11px">E</div>
<div class="t" style="left:618px;width:74px;text-align:center;top:365px;font-weight:bold;font-size:11px">F</div>
<div class="t" style="left:693px;width:74px;text-align:center;top:365px;font-weight:bold;font-size:11px">G</div>
<div class="a" style="left:212px;top:382px;width:527px;height:147px;overflow:hidden">
<div class="a" style="left:0;top:0px;width:527px;height:23px;background:#f4f4f4"></div>
<div class="t" style="left:0;width:30px;text-align:center;top:6px;font-size:11px">1</div>
<div class="a" style="left:0;top:23px;width:527px;height:23px;background:#ffffff"></div>
<div class="t" style="left:0;width:30px;text-align:center;top:29px;font-size:11px">2</div>
<div class="t" style="left:111px;top:29px;font-size:11px;letter-spacing:-0.3px">Año</div>
<div class="t" style="left:186px;top:29px;font-size:11px;letter-spacing:-0.3px">Mes Nombre</div>
<div class="t" style="left:261px;top:29px;font-size:11px;letter-spacing:-0.3px">Mes Nro</div>
<div class="t" style="left:336px;top:29px;font-size:11px;letter-spacing:-0.3px">Ventas</div>
<div class="t" style="left:411px;top:29px;font-size:11px;letter-spacing:-0.3px">Cantidades</div>
<div class="t" style="left:486px;top:29px;font-size:11px;letter-spacing:-0.3px">Margen</div>
<div class="a" style="left:0;top:46px;width:527px;height:23px;background:#f4f4f4"></div>
<div class="t" style="left:0;width:30px;text-align:center;top:52px;font-size:11px">3</div>
<div class="t" style="left:111px;top:52px;font-size:11px;letter-spacing:0.25px">2002</div>
<div class="t" style="left:186px;top:52px;font-size:11px;letter-spacing:-0.3px">Ene</div>
<div class="t" style="left:261px;top:52px;font-size:11px;letter-spacing:0.25px">1</div>
<div class="t" style="left:336px;top:52px;font-size:11px;letter-spacing:0.25px">1,335,402</div>
<div class="t" style="left:411px;top:52px;font-size:11px;letter-spacing:0.25px">9,115</div>
<div class="t" style="left:486px;top:52px;font-size:11px;letter-spacing:0.25px">465,405</div>
<div class="a" style="left:0;top:69px;width:527px;height:23px;background:#ffffff"></div>
<div class="t" style="left:0;width:30px;text-align:center;top:75px;font-size:11px">4</div>
<div class="t" style="left:111px;top:75px;font-size:11px;letter-spacing:0.25px">2002</div>
<div class="t" style="left:186px;top:75px;font-size:11px;letter-spacing:-0.3px">Feb</div>
<div class="t" style="left:261px;top:75px;font-size:11px;letter-spacing:0.25px">2</div>
<div class="t" style="left:336px;top:75px;font-size:11px;letter-spacing:0.25px">609,013</div>
<div class="t" style="left:411px;top:75px;font-size:11px;letter-spacing:0.25px">3,925</div>
<div class="t" style="left:486px;top:75px;font-size:11px;letter-spacing:0.25px">217,237</div>
<div class="a" style="left:0;top:92px;width:527px;height:23px;background:#f4f4f4"></div>
<div class="t" style="left:0;width:30px;text-align:center;top:98px;font-size:11px">5</div>
<div class="t" style="left:111px;top:98px;font-size:11px;letter-spacing:0.25px">2002</div>
<div class="t" style="left:186px;top:98px;font-size:11px;letter-spacing:-0.3px">Mar</div>
<div class="t" style="left:261px;top:98px;font-size:11px;letter-spacing:0.25px">3</div>
<div class="t" style="left:336px;top:98px;font-size:11px;letter-spacing:0.25px">1,381,758</div>
<div class="t" style="left:411px;top:98px;font-size:11px;letter-spacing:0.25px">8,095</div>
<div class="t" style="left:486px;top:98px;font-size:11px;letter-spacing:0.25px">553,748</div>
<div class="a" style="left:0;top:115px;width:527px;height:23px;background:#ffffff"></div>
<div class="t" style="left:0;width:30px;text-align:center;top:121px;font-size:11px">6</div>
<div class="t" style="left:111px;top:121px;font-size:11px;letter-spacing:0.25px">2002</div>
<div class="t" style="left:186px;top:121px;font-size:11px;letter-spacing:-0.3px">Abr</div>
<div class="t" style="left:261px;top:121px;font-size:11px;letter-spacing:0.25px">4</div>
<div class="t" style="left:336px;top:121px;font-size:11px;letter-spacing:0.25px">1,068,309</div>
<div class="t" style="left:411px;top:121px;font-size:11px;letter-spacing:0.25px">6,505</div>
<div class="t" style="left:486px;top:121px;font-size:11px;letter-spacing:0.25px">406,883</div>
<div class="a" style="left:0;top:138px;width:527px;height:23px;background:#f4f4f4"></div>
<div class="t" style="left:0;width:30px;text-align:center;top:144px;font-size:11px">7</div>
<div class="t" style="left:111px;top:144px;font-size:11px;letter-spacing:0.25px">2002</div>
<div class="t" style="left:186px;top:144px;font-size:11px;letter-spacing:-0.3px">May</div>
<div class="t" style="left:261px;top:144px;font-size:11px;letter-spacing:0.25px">5</div>
<div class="t" style="left:336px;top:144px;font-size:11px;letter-spacing:0.25px">1,081,885</div>
<div class="t" style="left:411px;top:144px;font-size:11px;letter-spacing:0.25px">6,401</div>
<div class="t" style="left:486px;top:144px;font-size:11px;letter-spacing:0.25px">444,664</div>
<div class="a" style="left:30px;top:0;width:1px;height:147px;background:#111"></div>
<div class="a" style="left:105px;top:0;width:1px;height:147px;background:#c8c8c8"></div>
<div class="a" style="left:180px;top:0;width:1px;height:147px;background:#c8c8c8"></div>
<div class="a" style="left:255px;top:0;width:1px;height:147px;background:#c8c8c8"></div>
<div class="a" style="left:330px;top:0;width:1px;height:147px;background:#c8c8c8"></div>
<div class="a" style="left:405px;top:0;width:1px;height:147px;background:#c8c8c8"></div>
<div class="a" style="left:480px;top:0;width:1px;height:147px;background:#c8c8c8"></div>
</div>
<div class="a" style="left:739px;top:359px;width:15px;height:170px;background:linear-gradient(90deg,#f3f2ed,#fbfaf6 60%,#eeede6)"></div>
<div class="a" style="left:739px;top:360px;width:14px;height:14px;background:linear-gradient(#dbe4fb,#bbcef5);border:1px solid #fff"><div class="a" style="left:1px;top:3px;line-height:0"><svg width="10" height="6" viewBox="0 0 10 6"><path d="M1 5 L5 1 L9 5" fill="none" stroke="#4a5a78" stroke-width="2"/></svg></div></div>
<div class="a" style="left:739px;top:375px;width:14px;height:35px;background:linear-gradient(90deg,#c8d5f7,#b5c8f3);border:1px solid #f2f5ff"></div>
<div class="a" style="left:743px;top:389px;width:6px;height:1px;background:#8ea6dc"></div>
<div class="a" style="left:743px;top:391px;width:6px;height:1px;background:#8ea6dc"></div>
<div class="a" style="left:743px;top:393px;width:6px;height:1px;background:#8ea6dc"></div>
<div class="a" style="left:743px;top:395px;width:6px;height:1px;background:#8ea6dc"></div>
<div class="a" style="left:739px;top:513px;width:14px;height:14px;background:linear-gradient(#dbe4fb,#bbcef5);border:1px solid #fff"><div class="a" style="left:1px;top:3px;line-height:0"><svg width="10" height="6" viewBox="0 0 10 6"><path d="M1 1 L5 5 L9 1" fill="none" stroke="#4a5a78" stroke-width="2"/></svg></div></div>
<div class="a" style="left:212px;top:529px;width:527px;height:15px;background:linear-gradient(#f3f2ed,#fbfaf6 60%,#eeede6)"></div>
<div class="a" style="left:213px;top:529px;width:14px;height:14px;background:linear-gradient(#dbe4fb,#bbcef5);border:1px solid #fff"><div class="a" style="left:3px;top:1px;line-height:0"><svg width="6" height="10" viewBox="0 0 6 10"><path d="M5 1 L1 5 L5 9" fill="none" stroke="#4a5a78" stroke-width="2"/></svg></div></div>
<div class="a" style="left:229px;top:529px;width:286px;height:14px;background:linear-gradient(#c8d5f7,#b5c8f3);border:1px solid #f2f5ff"></div>
<div class="a" style="left:369px;top:533px;width:1px;height:6px;background:#8ea6dc"></div>
<div class="a" style="left:371px;top:533px;width:1px;height:6px;background:#8ea6dc"></div>
<div class="a" style="left:373px;top:533px;width:1px;height:6px;background:#8ea6dc"></div>
<div class="a" style="left:375px;top:533px;width:1px;height:6px;background:#8ea6dc"></div>
<div class="a" style="left:723px;top:529px;width:14px;height:14px;background:linear-gradient(#dbe4fb,#bbcef5);border:1px solid #fff"><div class="a" style="left:3px;top:1px;line-height:0"><svg width="6" height="10" viewBox="0 0 6 10"><path d="M1 1 L5 5 L1 9" fill="none" stroke="#4a5a78" stroke-width="2"/></svg></div></div>
<div class="a" style="left:739px;top:528px;width:15px;height:16px;background:#fff"></div>
<div class="a" style="left:2px;top:545px;width:779px;height:18px;background:#fff"></div>
<div class="a" style="left:0px;top:563px;width:783px;height:1px;background:#8c7a66"></div>
<div class="a" style="left:0px;top:564px;width:783px;height:2px;background:#d6bea2"></div>
<div class="a" style="left:0px;top:0px;width:1px;height:566px;background:#8a7c70"></div>
<div class="a" style="left:1px;top:29px;width:1px;height:516px;background:#dcdcdc"></div>
<div class="a" style="left:781px;top:2px;width:1px;height:564px;background:#8a7c70"></div>
<div class="a" style="left:782px;top:0px;width:1px;height:566px;background:#d8d8d8"></div>
</body></html>
